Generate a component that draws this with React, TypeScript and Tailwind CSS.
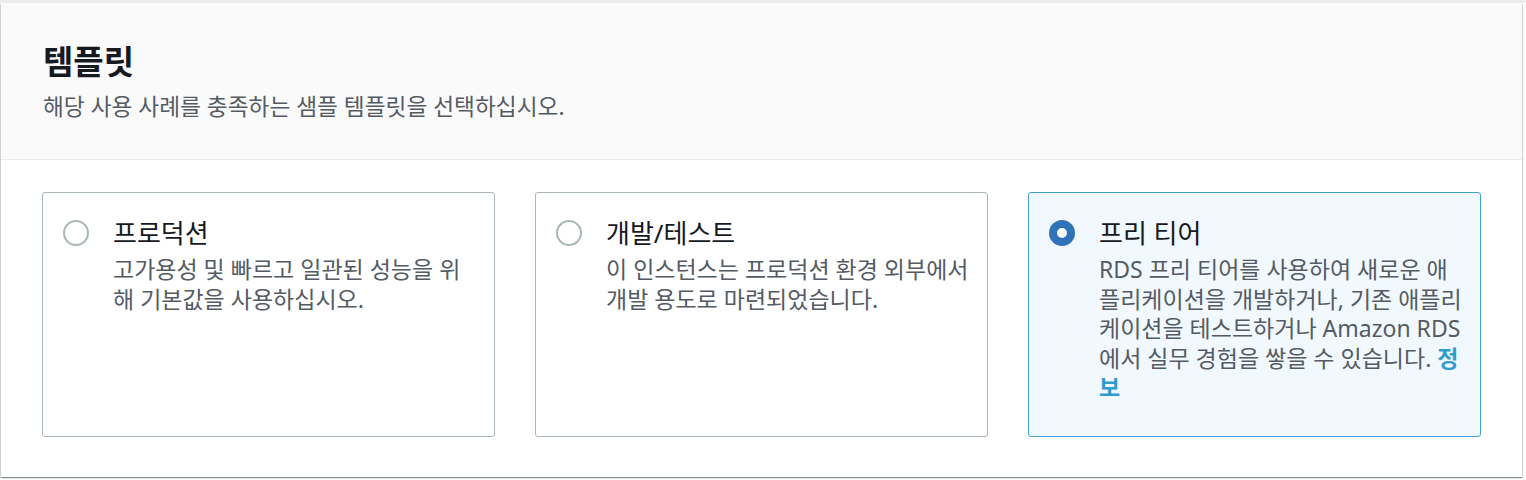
import React from "react";

const font = {
  fontFamily:
    '"Noto Sans", "Noto Sans CJK KR", "Liberation Sans", sans-serif',
};

function Radio({ checked }: { checked: boolean }) {
  return checked ? (
    <span className="mt-[2px] block h-[26px] w-[26px] shrink-0 rounded-full border-[8px] border-[#2f72b7] bg-white" />
  ) : (
    <span className="mt-[2px] block h-[26px] w-[26px] shrink-0 rounded-full border-2 border-[#aab7b8] bg-white" />
  );
}

function Tile({
  checked,
  label,
  lines,
  link,
}: {
  checked: boolean;
  label: string;
  lines: string[];
  link?: [string, string];
}) {
  return (
    <div
      className={
        checked
          ? "flex h-[245px] gap-[24px] rounded-[3px] border border-[#3fa2cf] bg-[#f1f8fe] pl-[20px] pr-[12px] pt-[25px]"
          : "flex h-[245px] gap-[24px] rounded-[3px] border border-[#aab7b8] bg-white pl-[20px] pr-[12px] pt-[25px]"
      }
    >
      <Radio checked={checked} />
      <div className="min-w-0 flex-1">
        <div className="text-[26px] leading-[30px] text-[#16191f]">{label}</div>
        <div className="mt-[7px] whitespace-nowrap text-[23px] leading-[29.5px] text-[#545b64]">
          {lines.map((l, i) => (
            <div key={i}>
              {l}
              {link && i === lines.length - 1 ? (
                <>
                  {" "}
                  <a className="font-bold text-[#2f9bd0]" href="#">
                    {link[0]}
                  </a>
                </>
              ) : null}
            </div>
          ))}
          {link ? (
            <div>
              <a className="font-bold text-[#2f9bd0]" href="#">
                {link[1]}
              </a>
            </div>
          ) : null}
        </div>
      </div>
    </div>
  );
}

export default function App() {
  return (
    <div className="min-h-[480px] bg-white" style={font}>
      <div className="h-[3px] bg-[#eceeee]" />
      <div className="ml-[1px] mr-[4px] bg-white shadow-[0_1px_1px_0_rgba(0,28,36,0.3),1px_1px_1px_0_rgba(0,28,36,0.15),-1px_1px_1px_0_rgba(0,28,36,0.15)]">
        <div className="border-b border-[#eaeded] bg-[#fafafa] pb-[38px] pl-[42px] pt-[39px]">
          <h2 className="text-[33px] font-bold leading-[40px] text-[#16191f]">
            템플릿
          </h2>
          <p className="mt-[11px] text-[22.7px] leading-[28px] text-[#545b64]">
            해당 사용 사례를 충족하는 샘플 템플릿을 선택하십시오.
          </p>
        </div>
        <div className="grid grid-cols-3 gap-[40px] px-[41px] pb-[40px] pt-[32px]">
          <Tile
            checked={false}
            label="프로덕션"
            lines={["고가용성 및 빠르고 일관된 성능을 위", "해 기본값을 사용하십시오."]}
          />
          <Tile
            checked={false}
            label="개발/테스트"
            lines={["이 인스턴스는 프로덕션 환경 외부에서", "개발 용도로 마련되었습니다."]}
          />
          <Tile
            checked={true}
            label="프리 티어"
            lines={[
              "RDS 프리 티어를 사용하여 새로운 애",
              "플리케이션을 개발하거나, 기존 애플리",
              "케이션을 테스트하거나 Amazon RDS",
              "에서 실무 경험을 쌓을 수 있습니다.",
            ]}
            link={["정", "보"]}
          />
        </div>
      </div>
    </div>
  );
}
